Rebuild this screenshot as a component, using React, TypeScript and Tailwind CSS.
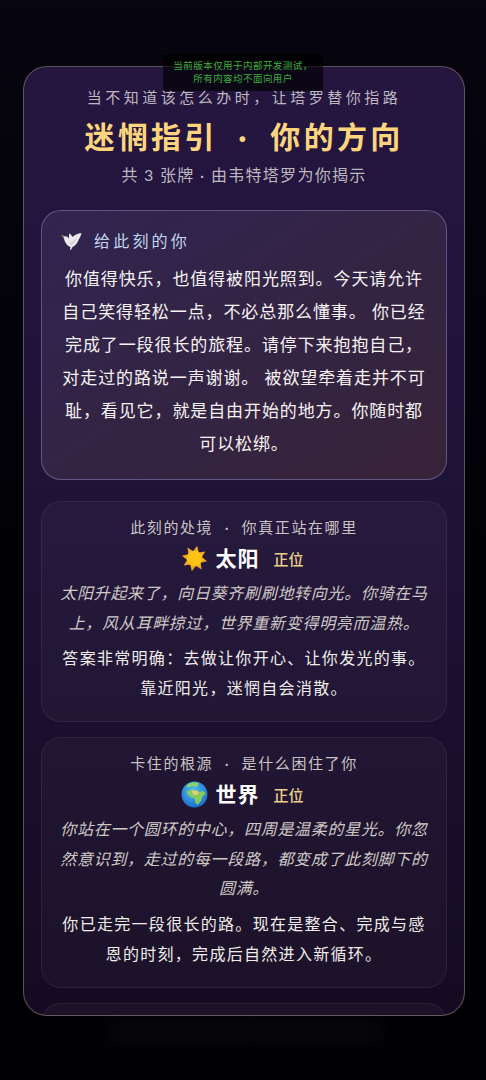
import React from "react";

const font = { fontFamily: 'Lato, "Noto Sans CJK SC", "Noto Sans", sans-serif' };

function Dove() {
  return (
    <svg width="21" height="19" viewBox="0 0 21 19">
      <path d="M0 3l3 .5 2 2-1.500.5-2-1z" fill="#7c8a3c" />
      <path d="M2.500 5c2-1.500 4-.5 5.500 1.500L8 1.500c1.500.5 3 2 3.500 3.500 2-2 5-3.500 9-4-.5 3-2 5-3 7-1 3-3.500 6-6 7l-1.500 3-1-.5.500-2.500C6 14 3.500 10 2.500 5z" fill="#ebe7ec" />
      <path d="M8 11c3-1 6-3 8-6-.5 4-3 7-6 8.500z" fill="#d8d4dc" />
    </svg>
  );
}

function Sun() {
  const big = [0, 45, 90, 135, 180, 225, 270, 315];
  return (
    <svg width="27" height="27" viewBox="0 0 26 26">
      {big.map((r) => (
        <path key={r} d="M10.200 6.500L13 .5 15.800 6.500z" fill="#f0a62e" transform={`rotate(${r + 12} 13 13)`} />
      ))}
      <circle cx="13" cy="13" r="7.500" fill="#fdc312" />
    </svg>
  );
}

function Globe() {
  return (
    <svg width="27" height="27" viewBox="0 0 26 26">
      <defs>
        <radialGradient id="g" cx="45%" cy="35%" r="70%">
          <stop offset="0%" stopColor="#4fc0f5" />
          <stop offset="100%" stopColor="#1668c8" />
        </radialGradient>
      </defs>
      <circle cx="13" cy="13" r="12.500" fill="url(#g)" />
      <path d="M6 3.500c3-2 7-3 11-1.500l-1 3-3 .5-2-1-3 2-2.500-1z" fill="#8ed06a" />
      <path d="M5.500 10c3-2 7-1.500 10-.5l3 1 3-1 2.500 3-3 2-2 5-3 3.500-2-2-1-4.500-4-1-3-3z" fill="#86c95c" />
      <path d="M10 9.500c2-1 5-.5 7 1l-1 3-4 0z" fill="#d8cf78" />
    </svg>
  );
}

function Card({ label, icon, name, italic, answer }: { label: string; icon: React.ReactNode; name: string; italic: string; answer: string }) {
  return (
    <div className="flex flex-col items-center rounded-[20px] border border-[#ffffff10] bg-[#ffffff08] px-[16px] pt-[14px] pb-[18px] text-center">
      <div className="text-[15px] leading-[22px] tracking-[1.600px] text-[#c9c3c4] [word-spacing:6px]">{label}</div>
      <div className="mt-[4px] flex h-[32px] items-center pr-[3px]">
        {icon}
        <span className="ml-[7px] text-[21px] font-bold tracking-[1px] text-white">{name}</span>
        <span className="ml-[14px] mt-[3px] text-[15px] font-medium text-[#ecd08c]">正位</span>
      </div>
      <p className="mt-[4px] text-[16px] italic leading-[29.500px] tracking-[0.7px] text-[#cfc9c6]">{italic}</p>
      <p className="mt-[6px] text-[16px] leading-[30px] tracking-[1.300px] text-[#f0ecea]">{answer}</p>
    </div>
  );
}

export default function App() {
  return (
    <div style={font} className="relative h-[1080px] overflow-hidden bg-gradient-to-b from-[#07050f] via-[#020106] to-[#010103] pl-[23px] pt-[66px]">
      <div className="absolute left-[163px] top-[54px] z-10 w-[160px] rounded-[2px] bg-[#000000a8] py-[6px] text-center text-[9.500px] leading-[12.500px] tracking-[0.45px] text-[#3aae3a]">
        当前版本仅用于内部开发测试，<br />所有内容均不面向用户
      </div>
      <div className="absolute left-[105px] top-[1018px] h-[28px] w-[280px] rounded-[8px] bg-[#ffffff06] blur-[8px]" />
      <div className="h-[950px] w-[442px] overflow-hidden rounded-[24px] border border-[#8a7a70a0] bg-gradient-to-b from-[#251640] via-[#1e1236] to-[#140b22] px-[17px] pt-[18px]">
        <div className="text-center">
          <div className="text-[15px] leading-[24px] tracking-[3.500px] text-[#bdb7c0]">当不知道该怎么办时，让塔罗替你指路</div>
          <div className="mt-[5px] text-[30px] font-bold leading-[44px] tracking-[3.300px] text-[#fdd57e] [word-spacing:10px]">迷惘指引 · 你的方向</div>
          <div className="mt-[5px] text-[16px] leading-[24px] tracking-[1.300px] text-[#bdb7c0]">共 3 张牌 · 由韦特塔罗为你揭示</div>
        </div>
        <div className="mt-[23px] h-[270px] rounded-[20px] border border-[#7b76a8a0] bg-gradient-to-br from-[#302450] to-[#372338] px-[19px] pt-[18px]">
          <div className="flex h-[24px] items-center">
            <Dove />
            <span className="ml-[12px] text-[16px] tracking-[3.200px] text-[#c3d4ee]">给此刻的你</span>
          </div>
          <p className="mt-[9px] text-center text-[17px] leading-[33px] tracking-[0.9px] text-[#f5f2f2]">
            你值得快乐，也值得被阳光照到。今天请允许自己笑得轻松一点，不必总那么懂事。 你已经完成了一段很长的旅程。请停下来抱抱自己，对走过的路说一声谢谢。 被欲望牵着走并不可耻，看见它，就是自由开始的地方。你随时都可以松绑。
          </p>
        </div>
        <div className="mt-[21px] flex flex-col gap-[15px]">
          <Card label="此刻的处境 · 你真正站在哪里" icon={<Sun />} name="太阳" italic="太阳升起来了，向日葵齐刷刷地转向光。你骑在马上，风从耳畔掠过，世界重新变得明亮而温热。" answer="答案非常明确：去做让你开心、让你发光的事。靠近阳光，迷惘自会消散。" />
          <Card label="卡住的根源 · 是什么困住了你" icon={<Globe />} name="世界" italic="你站在一个圆环的中心，四周是温柔的星光。你忽然意识到，走过的每一段路，都变成了此刻脚下的圆满。" answer="你已走完一段很长的路。现在是整合、完成与感恩的时刻，完成后自然进入新循环。" />
          <div className="h-[60px] rounded-[20px] border border-[#ffffff10] bg-[#ffffff08]" />
        </div>
      </div>
    </div>
  );
}
